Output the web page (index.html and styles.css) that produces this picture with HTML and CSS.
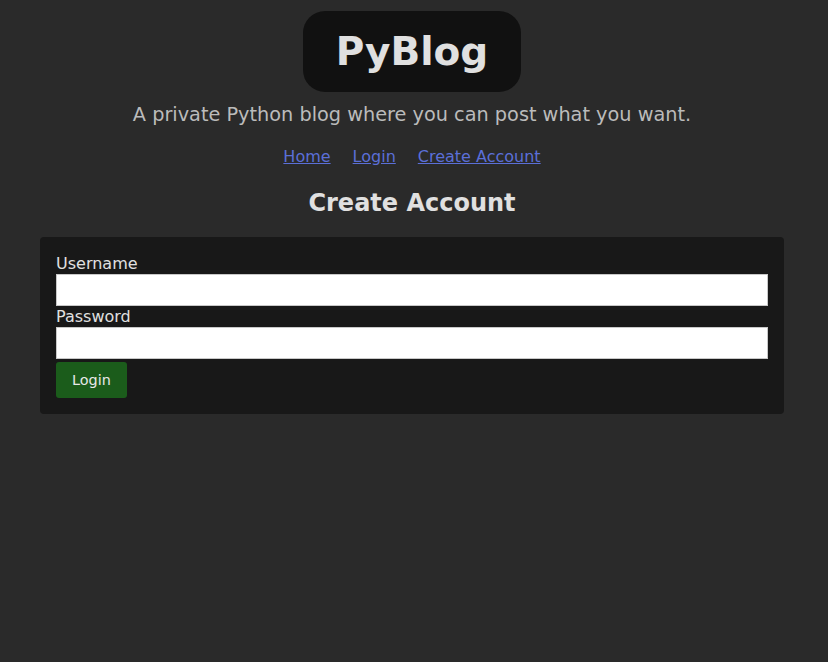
FILE: index.html
```html
<!DOCTYPE html>
<html>
<head>
<meta charset="utf-8">
<link rel="stylesheet" href="styles.css">
</head>
<body>
<div class="page">
  <header class="header">
    <h1 class="brand">PyBlog</h1>
    <p class="tagline">A private Python blog where you can post what you want.</p>
    <nav class="nav">
      <a href="#">Home</a>
      <a href="#">Login</a>
      <a href="#">Create Account</a>
    </nav>
  </header>
  <h2 class="title">Create Account</h2>
  <form class="card">
    <label class="label" for="u">Username</label>
    <input class="field" id="u" type="text">
    <label class="label" for="p">Password</label>
    <input class="field" id="p" type="password">
    <div class="actions"><button class="btn" type="button">Login</button></div>
  </form>
</div>
</body>
</html>
```

FILE: styles.css
```css
html, body {
  margin: 0;
  padding: 0;
  background: #2a2a2a;
  font-family: "DejaVu Sans", Verdana, sans-serif;
  color: #dddddd;
}
.page {
  padding: 11px 44px 0 40px;
}
.header {
  display: flex;
  flex-direction: column;
  align-items: center;
}
.brand {
  margin: 0;
  background: #111111;
  border-radius: 22px;
  padding: 0 33px;
  height: 81px;
  display: flex;
  align-items: center;
  font-size: 39px;
  font-weight: bold;
  color: #e0e0e0;
}
.tagline {
  margin: 11px 0 0;
  font-size: 19.3px;
  line-height: 23px;
  color: #bbbbbb;
}
.nav {
  margin-top: 21px;
  display: flex;
  gap: 22px;
  font-size: 16px;
  line-height: 19px;
}
.nav a {
  color: #5b6fd8;
}
.title {
  margin: 23px 0 0;
  text-align: center;
  font-size: 24px;
  line-height: 28px;
  color: #e0e0e0;
}
.card {
  margin-top: 20px;
  background: #181818;
  border-radius: 4px;
  padding: 16px;
  display: flex;
  flex-direction: column;
}
.label {
  font-size: 16px;
  line-height: 21px;
  color: #e0e0e0;
}
.field {
  margin: 0;
  height: 32px;
  box-sizing: border-box;
  border: 1px solid #c8c8c8;
  background: #ffffff;
  padding: 0 4px;
}
.actions {
  margin-top: 3px;
}
.btn {
  display: block;
  background: #1b5c1b;
  color: #e8e8e8;
  border: none;
  border-radius: 3px;
  font-family: "DejaVu Sans", Verdana, sans-serif;
  font-size: 14.4px;
  height: 36px;
  padding: 0 16px;
}
```
